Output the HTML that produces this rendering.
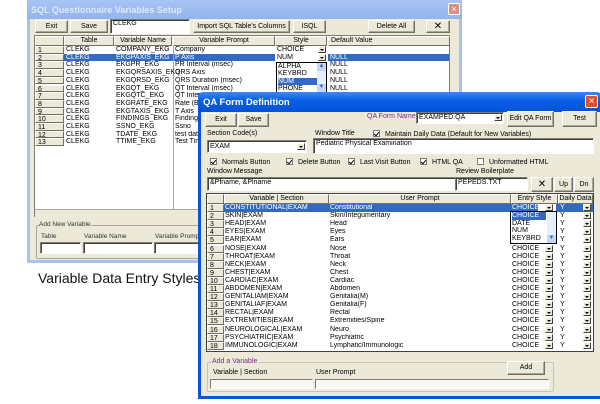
<!DOCTYPE html>
<html><head><meta charset="utf-8"><style>
*{margin:0;padding:0;box-sizing:border-box}
body{width:600px;height:404px;background:#fff;position:relative;overflow:hidden;font-family:"Liberation Sans",Arial,sans-serif;font-size:7px;line-height:8px;color:#000}
.a{position:absolute}
.btn{position:absolute;background:#ece9d8;border:1px solid;border-color:#fff #716f64 #716f64 #fff;box-shadow:inset -1px -1px 0 #aca899;text-align:center;font-size:7px;line-height:11px}
.in{position:absolute;background:#fff;border:1px solid;border-color:#7f7d73 #fff #fff #7f7d73;box-shadow:inset 1px 1px 0 #404040;font-size:7px;padding:1px 2px}
.dd{position:absolute;width:8px;height:7px;background:#ece9d8;border:1px solid;border-color:#fff #404040 #404040 #fff}
.dd:after{content:"";position:absolute;left:1px;top:2px;border:2px solid transparent;border-top:2px solid #000}
.row{position:absolute;left:0;right:0;white-space:nowrap;overflow:hidden}
.row span{position:absolute;top:0}
.rn{background:#ece9d8;border:1px solid;border-color:#fff #716f64 #716f64 #fff;height:100%;padding-left:2px}
.hd{position:absolute;background:#ece9d8;border:1px solid;border-color:#fff #716f64 #716f64 #fff;text-align:center;height:100%}
.sel{background:#316ac5;color:#fff}
.cb{display:inline-block;width:7px;height:7px;border:1px solid #7f7d73;background:#fff;vertical-align:-1px;margin-right:5px;position:relative}
.cb.c:after{content:"";position:absolute;left:1px;top:0;width:2px;height:4px;border:solid #000;border-width:0 1px 1px 0;transform:rotate(40deg)}
</style></head><body>

<!-- back window -->
<div class="a" style="left:27px;top:0;width:435px;height:263px;background:#ece9d8;border:3px solid #a6c2f0;border-top:0"></div>
<div class="a" style="left:27px;top:0;width:435px;height:19px;background:linear-gradient(#a8c4f4,#93b4ec);border-radius:4px 4px 0 0"></div>
<div class="a" style="left:31px;top:5px;font-size:9px;line-height:10px;font-weight:bold;color:#dde8fb">SQL Questionnaire Variables Setup</div>
<div class="a" style="left:448px;top:3px;width:12px;height:12px;background:#d88e80;border:1px solid #fff;border-radius:2px;color:#fff;font-size:9px;line-height:10px;text-align:center">×</div>
<div class="btn" style="left:35px;top:20px;width:33px;height:13px">Exit</div>
<div class="btn" style="left:70px;top:20px;width:38px;height:13px">Save</div>
<div class="in" style="left:110px;top:19px;width:80px;height:15px;padding-top:0">CLEKG</div>
<div class="btn" style="left:193px;top:20px;width:97px;height:13px">Import SQL Table's Columns</div>
<div class="btn" style="left:293px;top:20px;width:33px;height:13px">ISQL</div>
<div class="btn" style="left:368px;top:20px;width:47px;height:13px">Delete All</div>
<div class="btn" style="left:426px;top:20px;width:24px;height:13px;font-size:10px">✕</div>

<div class="a" style="left:34px;top:35px;width:416px;height:182px;background:#fff;border:1px solid #7f7d73">
  <div class="a" style="left:0;top:0;right:0;height:10px">
    <div class="hd" style="left:0;width:29px"></div>
    <div class="hd" style="left:29px;width:50px">Table</div>
    <div class="hd" style="left:79px;width:58px">Variable Name</div>
    <div class="hd" style="left:138px;width:102px">Variable Prompt</div>
    <div class="hd" style="left:240px;width:52px">Style</div>
    <div class="hd" style="left:293px;width:122px;text-align:left;padding-left:2px">Default Value</div>
  </div>
  <div class="a" style="left:138px;top:10px;width:1px;height:163px;background:#aca899"></div>
  <div class="a" style="left:0;top:10px;right:0;line-height:7.7px">
    <div class="row" style="top:0;height:7.7px"><span class="rn" style="left:0;width:29px">1</span><span style="left:31px">CLEKG</span><span style="left:81px">COMPANY_EKG</span><span style="left:140px">Company</span><span style="left:242px">CHOICE</span><span class="dd" style="left:283px;top:0"></span></div>
    <div class="row" style="top:7.7px;height:7.7px"><span class="rn" style="left:0;width:29px">2</span><span class="sel" style="left:29px;width:109px;height:7.7px"></span><span style="left:31px;color:#fff">CLEKG</span><span style="left:81px;color:#fff">EKGPAXIS_EKG</span><span class="sel" style="left:139px;width:101px;height:7.7px;padding-left:1px">P Axis</span><span style="left:242px">NUM</span><span class="dd" style="left:283px;top:0"></span><span class="sel" style="left:293px;width:122px;height:7.7px;padding-left:2px">NULL</span></div>
    <div class="row" style="top:15.4px;height:7.7px"><span class="rn" style="left:0;width:29px">3</span><span style="left:31px">CLEKG</span><span style="left:81px">EKGPR_EKG</span><span style="left:140px">PR Interval (msec)</span><span style="left:295px">NULL</span></div>
    <div class="row" style="top:23.1px;height:7.7px"><span class="rn" style="left:0;width:29px">4</span><span style="left:31px">CLEKG</span><span style="left:81px">EKGQRSAXIS_EKG</span><span style="left:140px">QRS Axis</span><span style="left:295px">NULL</span></div>
    <div class="row" style="top:30.8px;height:7.7px"><span class="rn" style="left:0;width:29px">5</span><span style="left:31px">CLEKG</span><span style="left:81px">EKGQRSD_EKG</span><span style="left:140px">QRS Duration (msec)</span><span style="left:295px">NULL</span></div>
    <div class="row" style="top:38.5px;height:7.7px"><span class="rn" style="left:0;width:29px">6</span><span style="left:31px">CLEKG</span><span style="left:81px">EKGQT_EKG</span><span style="left:140px">QT Interval (msec)</span><span style="left:295px">NULL</span></div>
    <div class="row" style="top:46.2px;height:7.7px"><span class="rn" style="left:0;width:29px">7</span><span style="left:31px">CLEKG</span><span style="left:81px">EKGQTC_EKG</span><span style="left:140px">QT Interval</span></div>
    <div class="row" style="top:53.9px;height:7.7px"><span class="rn" style="left:0;width:29px">8</span><span style="left:31px">CLEKG</span><span style="left:81px">EKGRATE_EKG</span><span style="left:140px">Rate (BPM)</span></div>
    <div class="row" style="top:61.6px;height:7.7px"><span class="rn" style="left:0;width:29px">9</span><span style="left:31px">CLEKG</span><span style="left:81px">EKGTAXIS_EKG</span><span style="left:140px">T Axis</span></div>
    <div class="row" style="top:69.3px;height:7.7px"><span class="rn" style="left:0;width:29px">10</span><span style="left:31px">CLEKG</span><span style="left:81px">FINDINGS_EKG</span><span style="left:140px">Findings</span></div>
    <div class="row" style="top:77px;height:7.7px"><span class="rn" style="left:0;width:29px">11</span><span style="left:31px">CLEKG</span><span style="left:81px">SSNO_EKG</span><span style="left:140px">Ssno</span></div>
    <div class="row" style="top:84.7px;height:7.7px"><span class="rn" style="left:0;width:29px">12</span><span style="left:31px">CLEKG</span><span style="left:81px">TDATE_EKG</span><span style="left:140px">test date</span></div>
    <div class="row" style="top:92.4px;height:7.7px"><span class="rn" style="left:0;width:29px">13</span><span style="left:31px">CLEKG</span><span style="left:81px">TTIME_EKG</span><span style="left:140px">Test Time</span></div>
  </div>
  <div class="a" style="left:241px;top:26px;width:51px;height:31px;background:#fff;border:1px solid #000;line-height:7.3px;padding-left:1px">ALPHA<br>KEYBRD<br><span style="background:#316ac5;color:#fff;display:inline-block;width:39px">NUM</span><br>PHONE
    <div class="a" style="right:0;top:0;width:9px;height:29px;background:#e6eefc"><div style="height:8px;background:#c2d5fa;font-size:6px;text-align:center;color:#4d6185">▲</div><div style="position:absolute;bottom:0;width:9px;height:8px;background:#c2d5fa;font-size:6px;text-align:center;color:#4d6185">▼</div></div>
  </div>
  <div class="a" style="left:0;top:173px;right:0;height:8px;background:#ece9d8;border-top:1px solid #aca899"></div>
</div>
<div class="a" style="left:36px;top:225px;width:420px;height:34px;border:1px solid #aca899;border-radius:2px"></div>
<div class="a" style="left:39px;top:221px;background:#ece9d8;font-size:6.5px;color:#333">Add New Variable</div>
<div class="a" style="left:41px;top:233px;font-size:6.5px;color:#333">Table</div>
<div class="a" style="left:84px;top:233px;font-size:6.5px;color:#333">Variable Name</div>
<div class="a" style="left:155px;top:233px;font-size:6.5px;color:#333">Variable Prompt</div>
<div class="in" style="left:40px;top:242px;width:41px;height:12px"></div>
<div class="in" style="left:83px;top:242px;width:70px;height:12px"></div>
<div class="in" style="left:154px;top:242px;width:60px;height:12px"></div>

<div class="a" style="left:38px;top:270px;font-size:14px;line-height:16px;color:#111">Variable Data Entry Styles</div>

<!-- front window -->
<div class="a" style="left:198px;top:93px;width:404px;height:306px;background:#ece9d8;border:3px solid #0a53db;border-top:0;border-right:0"></div>
<div class="a" style="left:198px;top:92px;width:404px;height:20px;background:linear-gradient(#3d8af5,#0a5fe6 40%,#0453d6);border-radius:5px 5px 0 0"></div>
<div class="a" style="left:203px;top:97px;font-size:9.5px;line-height:11px;font-weight:bold;color:#fff">QA Form Definition</div>
<div class="a" style="left:585px;top:95px;width:13px;height:13px;background:#e0502a;border:1px solid #fff;border-radius:2px;color:#fff;font-size:10px;line-height:11px;text-align:center">×</div>

<div class="btn" style="left:205px;top:113px;width:32px;height:14px">Exit</div>
<div class="btn" style="left:238px;top:113px;width:31px;height:14px">Save</div>
<div class="a" style="left:367px;top:113px;color:#7a2a8f">QA Form Name</div>
<div class="in" style="left:416px;top:112px;width:88px;height:12px;padding-top:1px">EXAMPED.QA</div><div class="dd" style="left:494px;top:114px"></div>
<div class="btn" style="left:507px;top:111px;width:47px;height:16px;line-height:14px">Edit QA Form</div>
<div class="btn" style="left:562px;top:111px;width:35px;height:16px;line-height:14px">Test</div>

<div class="a" style="left:207px;top:130px">Section Code(s)</div>
<div class="in" style="left:207px;top:140px;width:100px;height:13px;padding-top:2px">EXAM</div><div class="dd" style="left:297px;top:143px"></div>
<div class="a" style="left:315px;top:130px">Window Title</div>
<div class="a" style="left:373px;top:130px"><span class="cb c"></span>Maintain Daily Data (Default for New Variables)</div>
<div class="in" style="left:313px;top:138px;width:281px;height:16px;padding-top:1px">Pediatric Physical Examination</div>

<div class="a" style="left:210px;top:158px"><span class="cb c"></span>Normals Button</div>
<div class="a" style="left:286px;top:158px"><span class="cb c"></span>Delete Button</div>
<div class="a" style="left:348px;top:158px"><span class="cb c"></span>Last Visit Button</div>
<div class="a" style="left:420px;top:158px"><span class="cb c"></span>HTML QA</div>
<div class="a" style="left:477px;top:158px"><span class="cb"></span>Unformatted HTML</div>

<div class="a" style="left:207px;top:168px">Window Message</div>
<div class="in" style="left:207px;top:177px;width:249px;height:14px;padding-top:1px">&amp;Pfname, &amp;Plname</div>
<div class="a" style="left:456px;top:168px">Review Boilerplate</div>
<div class="in" style="left:455px;top:177px;width:73px;height:14px;padding-top:1px">PEPEDS.TXT</div>
<div class="btn" style="left:531px;top:177px;width:22px;height:15px;font-size:10px;line-height:13px">✕</div>
<div class="btn" style="left:554px;top:177px;width:19px;height:15px;line-height:13px">Up</div>
<div class="btn" style="left:574px;top:177px;width:20px;height:15px;line-height:13px">Dn</div>

<div class="a" style="left:206px;top:193px;width:388px;height:159px;background:#fff;border:1px solid #404040">
  <div class="a" style="left:0;top:0;right:0;height:10px">
    <div class="hd" style="left:0;width:17px"></div>
    <div class="hd" style="left:17px;width:105px">Variable | Section</div>
    <div class="hd" style="left:122px;width:182px">User Prompt</div>
    <div class="hd" style="left:304px;width:47px">Entry Style</div>
    <div class="hd" style="left:351px;width:35px">Daily Data</div>
  </div>
  <div class="a" style="left:0;top:10px;right:0;line-height:8.1px">
    <div class="row" style="top:0;height:8.1px"><span class="rn" style="left:0;width:17px">1</span><span class="sel" style="left:17px;width:369px;height:8.1px;padding-left:1px">CONSTITUTIONAL|EXAM</span><span style="left:123px;color:#fff">Constitutional</span><span style="left:305px;color:#fff">CHOICE</span><span style="left:331px;width:18px;height:8px;background:#fff"></span><span class="dd" style="left:338px;top:0"></span><span style="left:353px;color:#fff">Y</span><span class="dd" style="left:376px;top:0"></span></div>
    <div class="row" style="top:8.1px;height:8.1px"><span class="rn" style="left:0;width:17px">2</span><span style="left:18px">SKIN|EXAM</span><span style="left:123px">Skin/Integumentary</span><span style="left:353px">Y</span><span class="dd" style="left:376px;top:0"></span></div>
    <div class="row" style="top:16.2px;height:8.1px"><span class="rn" style="left:0;width:17px">3</span><span style="left:18px">HEAD|EXAM</span><span style="left:123px">Head</span><span style="left:353px">Y</span><span class="dd" style="left:376px;top:0"></span></div>
    <div class="row" style="top:24.3px;height:8.1px"><span class="rn" style="left:0;width:17px">4</span><span style="left:18px">EYES|EXAM</span><span style="left:123px">Eyes</span><span style="left:353px">Y</span><span class="dd" style="left:376px;top:0"></span></div>
    <div class="row" style="top:32.4px;height:8.1px"><span class="rn" style="left:0;width:17px">5</span><span style="left:18px">EAR|EXAM</span><span style="left:123px">Ears</span><span style="left:353px">Y</span><span class="dd" style="left:376px;top:0"></span></div>
    <div class="row" style="top:40.5px;height:8.1px"><span class="rn" style="left:0;width:17px">6</span><span style="left:18px">NOSE|EXAM</span><span style="left:123px">Nose</span><span style="left:305px">CHOICE</span><span class="dd" style="left:338px;top:0"></span><span style="left:353px">Y</span><span class="dd" style="left:376px;top:0"></span></div>
    <div class="row" style="top:48.6px;height:8.1px"><span class="rn" style="left:0;width:17px">7</span><span style="left:18px">THROAT|EXAM</span><span style="left:123px">Throat</span><span style="left:305px">CHOICE</span><span class="dd" style="left:338px;top:0"></span><span style="left:353px">Y</span><span class="dd" style="left:376px;top:0"></span></div>
    <div class="row" style="top:56.7px;height:8.1px"><span class="rn" style="left:0;width:17px">8</span><span style="left:18px">NECK|EXAM</span><span style="left:123px">Neck</span><span style="left:305px">CHOICE</span><span class="dd" style="left:338px;top:0"></span><span style="left:353px">Y</span><span class="dd" style="left:376px;top:0"></span></div>
    <div class="row" style="top:64.8px;height:8.1px"><span class="rn" style="left:0;width:17px">9</span><span style="left:18px">CHEST|EXAM</span><span style="left:123px">Chest</span><span style="left:305px">CHOICE</span><span class="dd" style="left:338px;top:0"></span><span style="left:353px">Y</span><span class="dd" style="left:376px;top:0"></span></div>
    <div class="row" style="top:72.9px;height:8.1px"><span class="rn" style="left:0;width:17px">10</span><span style="left:18px">CARDIAC|EXAM</span><span style="left:123px">Cardiac</span><span style="left:305px">CHOICE</span><span class="dd" style="left:338px;top:0"></span><span style="left:353px">Y</span><span class="dd" style="left:376px;top:0"></span></div>
    <div class="row" style="top:81px;height:8.1px"><span class="rn" style="left:0;width:17px">11</span><span style="left:18px">ABDOMEN|EXAM</span><span style="left:123px">Abdomen</span><span style="left:305px">CHOICE</span><span class="dd" style="left:338px;top:0"></span><span style="left:353px">Y</span><span class="dd" style="left:376px;top:0"></span></div>
    <div class="row" style="top:89.1px;height:8.1px"><span class="rn" style="left:0;width:17px">12</span><span style="left:18px">GENITALIAM|EXAM</span><span style="left:123px">Genitalia(M)</span><span style="left:305px">CHOICE</span><span class="dd" style="left:338px;top:0"></span><span style="left:353px">Y</span><span class="dd" style="left:376px;top:0"></span></div>
    <div class="row" style="top:97.2px;height:8.1px"><span class="rn" style="left:0;width:17px">13</span><span style="left:18px">GENITALIAF|EXAM</span><span style="left:123px">Genitalia(F)</span><span style="left:305px">CHOICE</span><span class="dd" style="left:338px;top:0"></span><span style="left:353px">Y</span><span class="dd" style="left:376px;top:0"></span></div>
    <div class="row" style="top:105.3px;height:8.1px"><span class="rn" style="left:0;width:17px">14</span><span style="left:18px">RECTAL|EXAM</span><span style="left:123px">Rectal</span><span style="left:305px">CHOICE</span><span class="dd" style="left:338px;top:0"></span><span style="left:353px">Y</span><span class="dd" style="left:376px;top:0"></span></div>
    <div class="row" style="top:113.4px;height:8.1px"><span class="rn" style="left:0;width:17px">15</span><span style="left:18px">EXTREMITIES|EXAM</span><span style="left:123px">Extremities/Spine</span><span style="left:305px">CHOICE</span><span class="dd" style="left:338px;top:0"></span><span style="left:353px">Y</span><span class="dd" style="left:376px;top:0"></span></div>
    <div class="row" style="top:121.5px;height:8.1px"><span class="rn" style="left:0;width:17px">16</span><span style="left:18px">NEUROLOGICAL|EXAM</span><span style="left:123px">Neuro</span><span style="left:305px">CHOICE</span><span class="dd" style="left:338px;top:0"></span><span style="left:353px">Y</span><span class="dd" style="left:376px;top:0"></span></div>
    <div class="row" style="top:129.6px;height:8.1px"><span class="rn" style="left:0;width:17px">17</span><span style="left:18px">PSYCHIATRIC|EXAM</span><span style="left:123px">Psychiatric</span><span style="left:305px">CHOICE</span><span class="dd" style="left:338px;top:0"></span><span style="left:353px">Y</span><span class="dd" style="left:376px;top:0"></span></div>
    <div class="row" style="top:137.7px;height:8.1px"><span class="rn" style="left:0;width:17px">18</span><span style="left:18px">IMMUNOLOGIC|EXAM</span><span style="left:123px">Lymphatic/Immunologic</span><span style="left:305px">CHOICE</span><span class="dd" style="left:338px;top:0"></span><span style="left:353px">Y</span><span class="dd" style="left:376px;top:0"></span></div>
  </div>
  <div class="a" style="left:303px;top:17px;width:47px;height:33px;background:#fff;border:1px solid #000;line-height:7.6px;padding-left:1px"><span style="background:#316ac5;color:#fff;display:inline-block;width:34px">CHOICE</span><br>DATE<br>NUM<br>KEYBRD
    <div class="a" style="right:0;top:0;width:9px;height:31px;background:#e6eefc"><div style="position:absolute;bottom:0;width:9px;height:8px;background:#c2d5fa;font-size:6px;text-align:center;color:#4d6185">▼</div></div>
  </div>
</div>

<div class="a" style="left:207px;top:362px;width:347px;height:30px;border:1px solid #c8c5b5;border-radius:2px"></div>
<div class="a" style="left:211px;top:358px;background:#ece9d8;color:#7a2a8f;padding:0 1px">Add a Variable</div>
<div class="a" style="left:213px;top:369px">Variable | Section</div>
<div class="a" style="left:316px;top:369px">User Prompt</div>
<div class="btn" style="left:507px;top:361px;width:38px;height:14px">Add</div>
<div class="in" style="left:210px;top:379px;width:103px;height:10px;box-shadow:none;background:#f7f7f4"></div>
<div class="in" style="left:315px;top:379px;width:234px;height:10px;box-shadow:none;background:#f7f7f4"></div>

</body></html>
